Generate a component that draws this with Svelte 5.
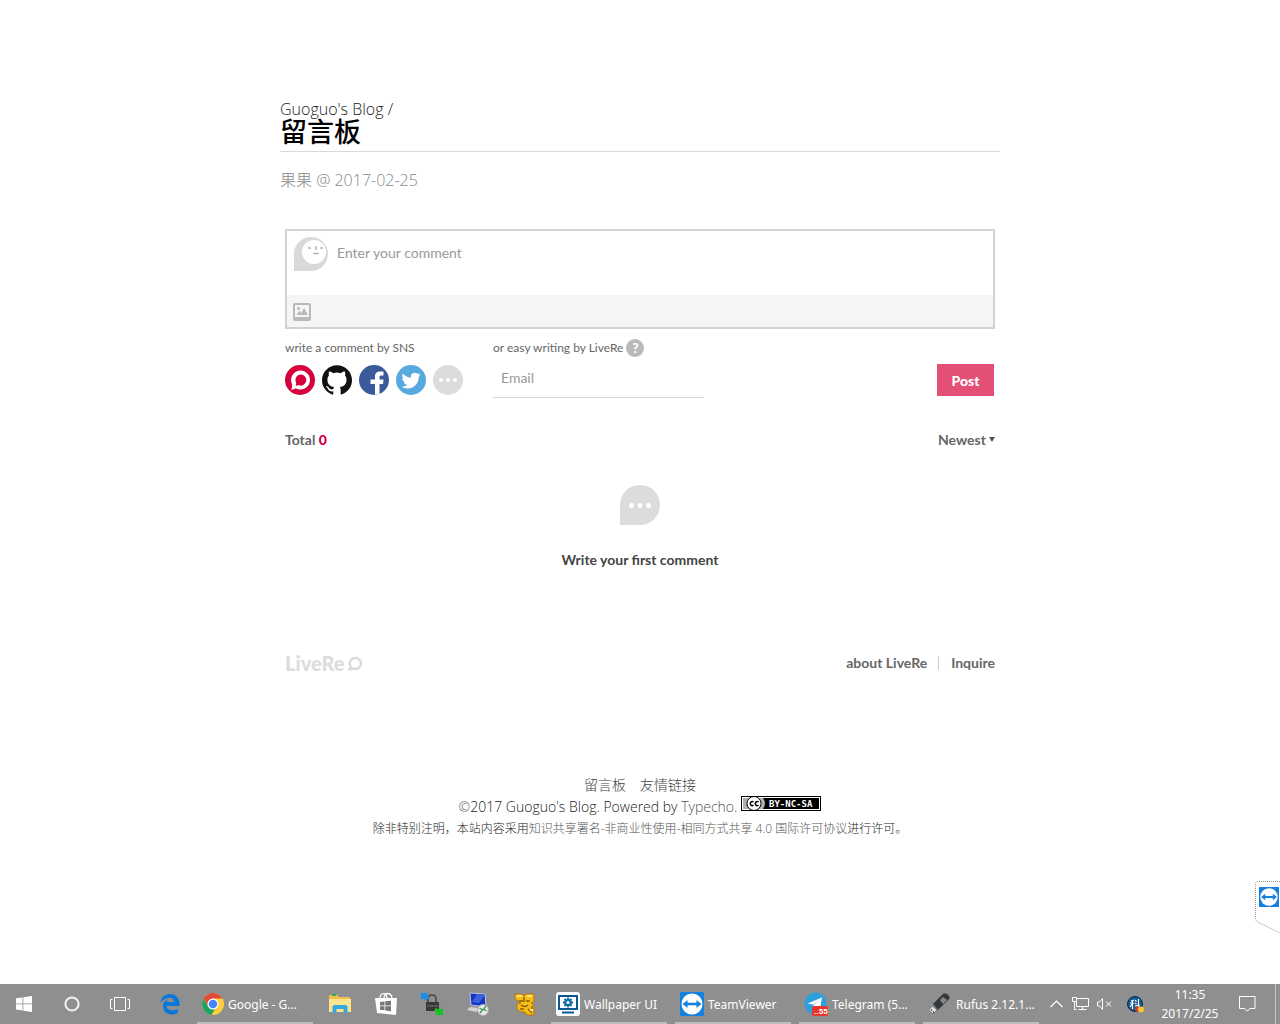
<script>
  let comment = $state('');
  let email = $state('');
  let order = $state('Newest');
</script>

{#snippet arrows(size)}
  <svg width={size} height={size} viewBox="0 0 24 24" aria-hidden="true">
    <rect width="24" height="24" rx="1" fill="#1481de" />
    <circle cx="12" cy="12" r="10.5" fill="#fff" />
    <path d="M2.500 12l5-4v2.800h9V8l5 4-5 4v-2.800h-9V16z" fill="#1481de" />
  </svg>
{/snippet}

<div class="desktop">
  <main>
    <header>
      <a class="crumb" href="#home">Guoguo's Blog /</a>
      <h1>留言板</h1>
    </header>
    <p class="meta">果果 @ 2017-02-25</p>

    <section class="livere">
      <form onsubmit={(e) => e.preventDefault()}>
        <div class="editor">
          <div class="entry">
            <svg width="34" height="34" viewBox="0 0 34 34" aria-hidden="true">
              <path d="M0 34V17A17 17 0 1 1 17 34z" fill="#d9d9d9" />
              <circle cx="20" cy="15" r="12" fill="#fff" />
              <circle cx="15.500" cy="11" r="1.300" fill="#bbb" />
              <circle cx="27.500" cy="11" r="1.300" fill="#bbb" />
              <path d="M22 9v4M19.500 16.500h5" stroke="#aaa" stroke-width="1.300" />
            </svg>
            <textarea aria-label="Comment" placeholder="Enter your comment" bind:value={comment}></textarea>
          </div>
          <div class="tools">
            <button type="button" aria-label="Attach image">
              <svg width="18" height="18" viewBox="0 0 18 18">
                <rect width="18" height="18" rx="2" fill="#b9b9b9" />
                <path d="M2 2h14v12H2z" fill="#f5f5f5" />
                <circle cx="5.500" cy="5.500" r="1.500" fill="#b9b9b9" />
                <path d="M3.500 12l3-4 2 2 2.500-5 4 7z" fill="#b9b9b9" />
              </svg>
            </button>
          </div>
        </div>

        <div class="login">
          <div class="sns">
            <p class="hint">write a comment by SNS</p>
            <div class="icons">
              <button type="button" aria-label="LiveRe">
                <svg width="30" height="30" viewBox="0 0 30 30">
                  <circle cx="15" cy="15" r="15" fill="#d6003b" />
                  <path d="M15.500 5.500a9.500 9.500 0 1 1-4.800 17.700c-1.600 1.200-3.200 1.600-5 1.400 1.500-1.600 1.900-3.500 1.300-5.400A9.500 9.500 0 0 1 15.500 5.500z" fill="#fff" />
                  <path d="M15.700 9.500a5.500 5.500 0 1 1-2.200 10.500c-1 .7-2 .8-3 .6.800-1 1-2.200.500-3.200a5.500 5.500 0 0 1 4.700-7.900z" fill="#d6003b" />
                </svg>
              </button>
              <button type="button" aria-label="GitHub">
                <svg width="30" height="30" viewBox="0 0 24 24">
                  <path fill="#111" d="M12 .297c-6.63 0-12 5.373-12 12 0 5.303 3.438 9.8 8.205 11.385.6.113.82-.258.82-.577 0-.285-.01-1.04-.015-2.04-3.338.724-4.042-1.61-4.042-1.61C4.422 18.07 3.633 17.7 3.633 17.7c-1.087-.744.084-.729.084-.729 1.205.084 1.838 1.236 1.838 1.236 1.07 1.835 2.809 1.305 3.495.998.108-.776.417-1.305.76-1.605-2.665-.3-5.466-1.332-5.466-5.93 0-1.31.465-2.38 1.235-3.22-.135-.303-.54-1.523.105-3.176 0 0 1.005-.322 3.3 1.23.96-.267 1.98-.399 3-.405 1.02.006 2.04.138 3 .405 2.28-1.552 3.285-1.23 3.285-1.23.645 1.653.24 2.873.12 3.176.765.84 1.23 1.91 1.23 3.22 0 4.61-2.805 5.625-5.475 5.92.42.36.81 1.096.81 2.22 0 1.606-.015 2.896-.015 3.286 0 .315.21.69.825.57C20.565 22.092 24 17.592 24 12.297c0-6.627-5.373-12-12-12" />
                </svg>
              </button>
              <button type="button" aria-label="Facebook">
                <svg width="30" height="30" viewBox="0 0 30 30">
                  <circle cx="15" cy="15" r="15" fill="#3b5a9a" />
                  <path d="M16 30V19h-4.500v-4.500H16v-3C16 8 18 6.500 21 6.500h3.500v4h-2.300c-1.400 0-1.700.7-1.700 1.800v2.200h4l-.5 4.500h-3.500v10z" fill="#fff" />
                </svg>
              </button>
              <button type="button" aria-label="Twitter">
                <svg width="30" height="30" viewBox="0 0 30 30">
                  <circle cx="15" cy="15" r="15" fill="#58a9df" />
                  <path transform="translate(5.500 6) scale(.8)" fill="#fff" d="M23.953 4.57a10 10 0 01-2.825.775 4.958 4.958 0 002.163-2.723c-.951.555-2.005.959-3.127 1.184a4.92 4.92 0 00-8.384 4.482C7.69 8.095 4.067 6.13 1.64 3.162a4.822 4.822 0 00-.666 2.475c0 1.71.87 3.213 2.188 4.096a4.904 4.904 0 01-2.228-.616v.06a4.923 4.923 0 003.946 4.827 4.996 4.996 0 01-2.212.085 4.936 4.936 0 004.604 3.417 9.867 9.867 0 01-6.102 2.105c-.39 0-.779-.023-1.17-.067a13.995 13.995 0 007.557 2.209c9.053 0 13.998-7.496 13.998-13.985 0-.21 0-.42-.015-.63A9.935 9.935 0 0024 4.59z" />
                </svg>
              </button>
              <button type="button" aria-label="More">
                <svg width="30" height="30" viewBox="0 0 30 30">
                  <circle cx="15" cy="15" r="15" fill="#dcdcdc" />
                  <g fill="#fff"><circle cx="8" cy="15" r="2" /><circle cx="15" cy="15" r="2" /><circle cx="22" cy="15" r="2" /></g>
                </svg>
              </button>
            </div>
          </div>
          <div class="easy">
            <div class="hint">
              <label for="email">or easy writing by LiveRe</label>
              <button type="button" class="help" aria-label="Help">?</button>
            </div>
            <input id="email" type="email" placeholder="Email" bind:value={email} />
          </div>
          <button class="post">Post</button>
        </div>
      </form>

      <div class="bar">
        <span>Total <b>0</b></span>
        <label class="sort">
          <select aria-label="Sort comments" bind:value={order}>
            <option>Newest</option>
            <option>Oldest</option>
          </select>
          <svg width="6" height="5" viewBox="0 0 6 5" aria-hidden="true"><path d="M0 0h6L3 5z" fill="#555" /></svg>
        </label>
      </div>

      <div class="empty">
        <svg width="40" height="40" viewBox="0 0 40 40" aria-hidden="true">
          <path d="M0 40V20A20 20 0 1 1 20 40z" fill="#dcdcdc" />
          <g fill="#fff"><circle cx="11.500" cy="20.500" r="2.500" /><circle cx="20" cy="20.500" r="2.500" /><circle cx="28.500" cy="20.500" r="2.500" /></g>
        </svg>
        <p>Write your first comment</p>
      </div>

      <div class="bar brand">
        <a class="logo" href="#livere">
          LiveRe
          <svg width="15" height="15" viewBox="0 0 15 15" aria-hidden="true">
            <path d="M7.500 2a5.500 5.500 0 1 1-2.500 10.400C4 13.200 2.800 13.400 1.500 13.200c1-.9 1.400-1.900 1-3A5.500 5.500 0 0 1 7.500 2z" fill="none" stroke="#dcdcdc" stroke-width="2.600" />
          </svg>
        </a>
        <nav>
          <a href="#about">about LiveRe</a>
          <a href="#inquire">Inquire</a>
        </nav>
      </div>
    </section>
  </main>

  <footer>
    <nav><a href="#board">留言板</a><a href="#links">友情链接</a></nav>
    <p class="copy">
      <span><span class="sign">©</span>2017 Guoguo's Blog. Powered by <a href="#typecho">Typecho.</a></span>
      <svg width="80" height="15" viewBox="0 0 80 15" aria-label="CC BY-NC-SA">
        <rect width="80" height="15" />
        <rect x="1" y="1" width="78" height="13" fill="#fff" />
        <rect x="2" y="2" width="76" height="11" />
        <path d="M2 2h20q4 5.500 0 11H2z" fill="#aab2ab" />
        <circle cx="13" cy="7.500" r="7" fill="#fff" stroke="#000" />
        <path d="M3 0h20v1H3zM3 14h20v1H3z" />
        <path d="M12.500 6a2 2 0 1 0 0 3.200M17.500 6a2 2 0 1 0 0 3.200" fill="none" stroke="#000" stroke-width="1.500" />
        <text x="28" y="11">BY-NC-SA</text>
      </svg>
    </p>
    <p class="license">除非特别注明，本站内容采用<a href="#license">知识共享署名-非商业性使用-相同方式共享 4.0 国际许可协议</a>进行许可。</p>
  </footer>

  <aside>
    <svg class="tab" width="25" height="54" viewBox="0 0 25 54" aria-hidden="true">
      <path d="M25 .5H3Q.5.500.5 3v34q0 3 3 4.500L25 52" fill="#fff" stroke="#999" stroke-dasharray="1 1" />
    </svg>
    <div class="mark">{@render arrows(20)}</div>
  </aside>

  <div class="taskbar">
    <button class="system" aria-label="Start">
      <svg width="16" height="16" viewBox="0 0 16 16"><path d="M0 2.300l6.500-.9v6.100H0zM7.300 1.300L16 0v7.500H7.300zM0 8.300h6.500v6.100L0 13.500zM7.300 8.300H16V16l-8.700-1.300z" fill="#fff" /></svg>
    </button>
    <button class="system" aria-label="Cortana">
      <svg width="16" height="16" viewBox="0 0 16 16"><circle cx="8" cy="8" r="6.600" fill="none" stroke="#f4f4f4" stroke-width="2" /></svg>
    </button>
    <button class="system" aria-label="Task view">
      <svg width="20" height="16" viewBox="0 0 20 16"><path d="M4.500 1.500h11v13h-11zM2.500 3.500h-2v9h2M17.500 3.500h2v9h-2" fill="none" stroke="#fff" /></svg>
    </button>
    <button class="pin first" aria-label="Edge">
      <svg width="21" height="21" viewBox="0 0 24 24"><path fill="#0a78d7" d="M.481 10.004C1.193 4.350 5.060.104 11.700 0c4.008.074 7.306 1.896 9.270 5.329.98 1.797 1.288 3.696 1.353 5.788v2.459H7.621c.07 6.070 8.930 5.863 12.742 3.185v4.937c-2.230 1.341-7.300 2.534-11.217.995-3.337-1.259-5.716-4.747-5.702-8.150-.111-4.412 2.190-7.336 5.702-8.963-.746.921-1.312 1.936-1.609 3.680h8.285S16.306 4.415 11.128 4.415C6.244 4.584 2.727 7.424.48 10.004z" /></svg>
    </button>
    <button class="task">
      <svg width="22" height="22" viewBox="0 0 22 22" aria-hidden="true">
        <circle cx="11" cy="11" r="11" fill="#ffcd41" />
        <path d="M1.500 5.500A11 11 0 0 1 20.500 5.500H11L6.500 13.500z" fill="#e04a3b" />
        <path d="M1.500 5.500L6.200 13.600l4.800 2.400 2 0-3.500 5.900A11 11 0 0 1 1.500 5.500z" fill="#1da362" />
        <circle cx="11" cy="11" r="5.500" fill="#fff" />
        <circle cx="11" cy="11" r="4.300" fill="#4484f3" />
      </svg>
      <span>Google - G...</span>
    </button>
    <button class="pin" aria-label="File Explorer">
      <svg width="22" height="20" viewBox="0 0 22 20">
        <path d="M0 1h8l2 2h11v15H0z" fill="#efc04d" />
        <path d="M3 0h4v2H3z" fill="#3aa757" />
        <path d="M0 5h22v13H0z" fill="#fde58f" />
        <path d="M3.500 19v-6q0-2 2-2h11q2 0 2 2v6h-4v-4h-7v4z" fill="#35a8e0" />
      </svg>
    </button>
    <button class="pin" aria-label="Store">
      <svg width="22" height="24" viewBox="0 0 22 24">
        <path d="M5 7c0-7 6-7 7-1M9 6c0-6 7-6 8 0" fill="none" stroke="#fff" stroke-width="1.300" />
        <path d="M0 6h22l-1 17L2 21z" fill="#fff" />
        <path d="M5 10l4.500-.5v4H5zM10.300 9.300l5.700-.6v4.800h-5.700zM5 14.300h4.500v4L5 17.700zM10.300 14.300H16v5l-5.700-.8z" fill="#777" />
      </svg>
    </button>
    <button class="pin" aria-label="Network lock">
      <svg width="24" height="24" viewBox="0 0 24 24">
        <path d="M8 11V7q0-4 4-4t4 4v4" fill="none" stroke="#555" stroke-width="2" />
        <path d="M1 1h7L7 3l2 3-3 3-3-3-2 2z" fill="#168eea" />
        <rect x="6" y="10" width="13" height="9" fill="#373737" />
        <path d="M7 14h11" stroke="#777" />
        <path d="M23 23h-8l2-2-3-3 2-2 4 2 3-3z" fill="#12c51d" />
      </svg>
    </button>
    <button class="pin" aria-label="Remote desktop">
      <svg width="22" height="24" viewBox="0 0 22 24">
        <path d="M3 1l15 1 1 13-15-2z" fill="#1733c4" stroke="#bac6df" />
        <path d="M10 2l8 1-6 8-7-1z" fill="#3a62dd" />
        <path d="M3 15l9 1-2 4-10-2z" fill="#d0d5dc" />
        <circle cx="16" cy="18" r="5.500" fill="#e7e9e6" stroke="#aaa" />
        <path d="M12.500 16l3 2-2.500 3M19 14l-2.500 3 3 2" fill="none" stroke="#3d984b" stroke-width="1.300" />
      </svg>
    </button>
    <button class="pin" aria-label="Organizer">
      <svg width="22" height="24" viewBox="0 0 22 24">
        <path d="M2 2h7l2 2 2-2h8v8l-3 1 3 3v9h-7l-2-3h-4l-4-3v-5l4-1-6-4z" fill="#f5bd15" stroke="#b97809" />
        <path d="M6 9h4M13 9h4M8 13q4 3 7 0M11 5v5M15 17l4 4M19 14v4M7 17h4" fill="none" stroke="#8a5b0a" stroke-width="1.400" />
        <path d="M4 4h5M14 4h5M17 18h3" stroke="#ffe778" stroke-width="2" />
      </svg>
    </button>
    <button class="task">
      <svg width="24" height="24" viewBox="0 0 24 24" aria-hidden="true">
        <rect width="24" height="24" rx="3" fill="#fff" />
        <path d="M3 4h18v13H3zM6 20.500h12" fill="none" stroke="#0b5a94" stroke-width="2" />
        <circle cx="12" cy="10.500" r="2.700" fill="none" stroke="#0b6cab" stroke-width="2.200" />
        <path d="M12 5.500v2M12 13.500v2M7 10.500h2M15 10.500h2M8.500 7l1.200 1.200M15.500 7l-1.200 1.200M8.500 14l1.200-1.200M15.500 14l-1.200-1.200" stroke="#0b6cab" stroke-width="1.800" />
      </svg>
      <span>Wallpaper UI</span>
    </button>
    <button class="task">
      {@render arrows(24)}
      <span>TeamViewer</span>
    </button>
    <button class="task">
      <svg width="24" height="24" viewBox="0 0 24 24" aria-hidden="true">
        <circle cx="11.500" cy="11.500" r="11" fill="#2ba0dc" />
        <path d="M3.500 11.500L18 5.500 16 17l-4-3-2 2.500-1-4z" fill="#fff" />
        <path d="M9 12.500l6-4.500-4.500 5-.5 3z" fill="#b5cfe4" />
        <rect x="8" y="14" width="16" height="10" rx="2" fill="#e8372f" />
        <text class="badge" x="10" y="22">..55</text>
      </svg>
      <span>Telegram (5...</span>
    </button>
    <button class="task">
      <svg width="24" height="24" viewBox="0 0 24 24" aria-hidden="true">
        <path d="M5 12L15 2q2-1 4 0l2 2q1 2 0 3L10 18z" fill="#34383b" stroke="#596065" />
        <path d="M12 8l3-3 4 3-4 4z" fill="#858c90" />
        <path d="M4.500 14l4.500 4-4 4-4.500-4z" fill="#e2e2e2" stroke="#777" />
        <path d="M3 17.500l1 1M5 19.500l1 1" stroke="#444" stroke-width="1.500" />
      </svg>
      <span>Rufus 2.12.1...</span>
    </button>

    <div class="tray">
      <button aria-label="Show hidden icons">
        <svg width="13" height="8" viewBox="0 0 13 8"><path d="M.5 7l6-6 6 6" fill="none" stroke="#fff" stroke-width="1.200" /></svg>
      </button>
      <button aria-label="Network">
        <svg width="17" height="14" viewBox="0 0 17 14"><path d="M5 1.500h11.500v8H4.500V5M10.500 9.500v3M6.500 12.500h8M.5.500h4v4h-4zM2.500 4.500v8h2" fill="none" stroke="#fff" /></svg>
      </button>
      <button aria-label="Volume muted">
        <svg width="15" height="12" viewBox="0 0 15 12"><path d="M.5 4h2l3-3.500v11L2.500 8h-2zM9 3.500l5 5M14 3.500l-5 5" fill="none" stroke="#fff" /></svg>
      </button>
      <button class="ime" aria-label="Input method">
        <svg width="17" height="17" viewBox="0 0 17 17">
          <circle cx="8" cy="8" r="7.500" fill="#14598d" stroke="#092c4c" />
          <path d="M4 5l3-1M3 7h4M5.500 4v9M5 8l-2 3M8 4l1.500 1.500M8 7l1.500 1M8 10l5-1M11.500 3v10" stroke="#fff" fill="none" stroke-width="1.200" />
          <circle cx="10.500" cy="13" r="2.500" fill="#e33730" />
          <circle cx="14" cy="13.500" r="3" fill="#fec52e" />
        </svg>
      </button>
      <div class="clock"><time>11:35</time><time>2017/2/25</time></div>
      <button class="center" aria-label="Action center">
        <svg width="17" height="16" viewBox="0 0 17 16"><path d="M.5.500h15.500v12h-5L8.300 15l-2.700-2.500H.5z" fill="none" stroke="#fff" /></svg>
      </button>
      <button class="peek" aria-label="Show desktop"></button>
    </div>
  </div>
</div>

<style>
  :global(body) { margin: 0; background: #fff; }
  * { box-sizing: border-box; }
  svg { display: block; flex: none; }
  a { color: inherit; text-decoration: none; }
  p, h1 { margin: 0; }
  button, input, textarea, select { font: inherit; color: inherit; border: 0; padding: 0; margin: 0; background: none; outline: none; }

  .desktop {
    position: relative;
    display: flex;
    flex-direction: column;
    min-height: 100vh;
    overflow: hidden;
    font-family: "Open Sans", "Noto Sans", "Noto Sans CJK SC", sans-serif;
  }
  main { width: 100%; max-width: 720px; margin: 0 auto; padding-top: 100px; }
  header { border-bottom: 1px solid #d9d9d9; padding-bottom: 7px; }
  .crumb { display: block; font-size: 16px; font-weight: 300; line-height: 18px; color: #222; }
  h1 { font-size: 27px; line-height: 26px; font-weight: 500; font-family: "Noto Sans CJK SC", sans-serif; color: #000; }
  .meta { margin-top: 18px; font-size: 16px; line-height: 20px; font-weight: 300; color: #888; font-family: "Open Sans", "Noto Sans CJK SC", sans-serif; }

  .livere { padding: 39px 5px 0; font-family: Lato, "Noto Sans", sans-serif; font-size: 14px; color: #666; }
  .editor { border: 2px solid #d2d2d2; }
  .entry { display: flex; gap: 9px; height: 64px; padding: 6px 7px 0; }
  textarea { flex: 1; resize: none; padding-top: 6px; line-height: 20px; }
  textarea::placeholder, input::placeholder { color: #999; opacity: 1; }
  .tools { display: flex; align-items: center; height: 32px; padding: 2px 0 0 6px; background: #f5f5f5; }
  .login { display: flex; align-items: flex-end; margin-top: 10px; }
  .sns { width: 208px; }
  .hint { display: flex; align-items: center; gap: 3px; height: 18px; font-size: 12px; line-height: 18px; }
  .icons { display: flex; gap: 7px; margin: 8px 0 3px; }
  .help { width: 18px; height: 18px; border-radius: 50%; background: #b9b9b9; color: #fff; font-size: 14px; font-weight: 700; line-height: 18px; text-align: center; }
  .easy { width: 211px; }
  .easy input { width: 100%; height: 41px; padding: 0 8px; border-bottom: 1px solid #d6d6d6; }
  .post { width: 57px; height: 32px; margin: 0 1px 2px auto; background: #e44f75; color: #fff; font-weight: 900; }
  .bar { display: flex; justify-content: space-between; align-items: center; height: 20px; margin-top: 31px; font-weight: 700; }
  .bar b { color: #d6003b; }
  .sort { display: flex; align-items: center; gap: 3px; }
  select { appearance: none; }
  .empty { display: flex; flex-direction: column; align-items: center; gap: 25px; margin-top: 36px; line-height: 20px; font-weight: 700; color: #444; }
  .brand { margin-top: 83px; }
  .brand nav { display: flex; }
  .brand nav a + a { margin-left: 11px; padding-left: 12px; border-left: 1px solid #ccc; }
  .brand nav a { line-height: 14px; }
  .logo { display: flex; align-items: center; gap: 4px; font: 900 20px/20px Lato, sans-serif; color: #dcdcdc; }

  footer { flex: 1; padding: 101px 16px 0; text-align: center; color: #222; font-family: "Open Sans", "Noto Sans CJK SC", sans-serif; font-weight: 300; }
  footer nav { display: flex; justify-content: center; gap: 14px; font-size: 14px; line-height: 22px; color: #444; }
  .copy { display: flex; justify-content: center; gap: 4px; font-size: 14px; line-height: 22px; }
  .copy text { font: 700 9px "DejaVu Sans Mono", monospace; fill: #fff; }
  .copy a, .license a, .sign { color: #555; }
  .license { font-size: 12px; line-height: 22px; }

  aside { position: absolute; right: 0; bottom: 89px; }
  .mark { position: absolute; right: 1px; top: 6px; }

  .taskbar { display: flex; height: 40px; background: #8f8f8f; color: #fff; font-family: "Noto Sans", sans-serif; font-size: 12px; }
  .taskbar button { display: flex; align-items: center; justify-content: center; }
  .taskbar .system { width: 48px; }
  .taskbar .pin { width: 46px; }
  .taskbar .first { margin-left: 3px; }
  .taskbar .task { width: 116px; margin: 0 4px; padding: 2px 0 0 5px; justify-content: flex-start; gap: 4px; border-bottom: 2px solid #bdbdbd; white-space: nowrap; }
  .badge { font: 700 8px Roboto, sans-serif; fill: #fff; }
  .tray { display: flex; margin-left: auto; }
  .tray button { width: 24px; }
  .tray .ime { width: 38px; }
  .clock { display: flex; flex-direction: column; width: 72px; text-align: center; line-height: 19px; padding-top: 1px; }
  .tray .center { width: 42px; }
  .tray .peek { width: 5px; margin-left: 7px; border-left: 1px solid #c4c4c4; }
</style>
